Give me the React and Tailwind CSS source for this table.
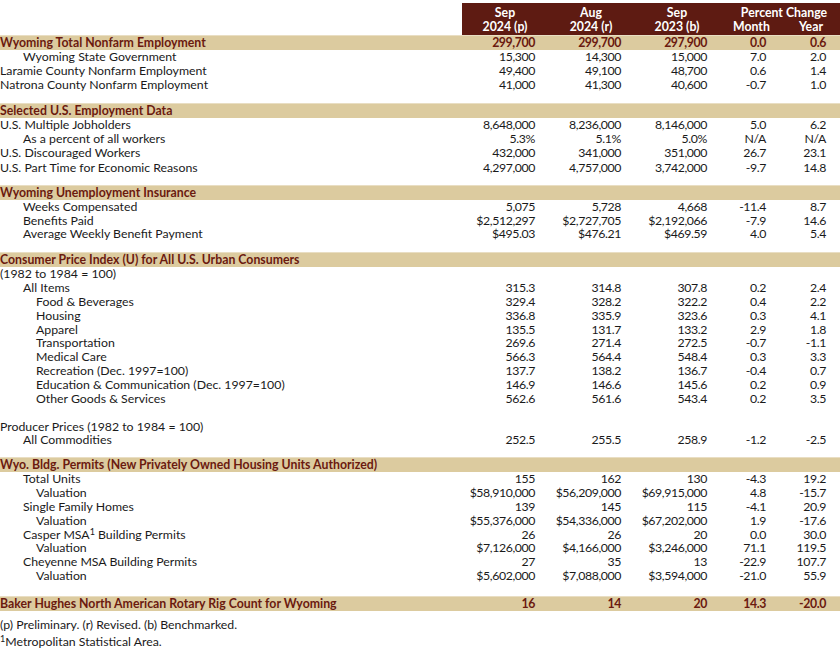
import React from 'react';

const COLS = 'grid grid-cols-[462px_86px_86px_86px_59px_61px]';

const sections = [
  {
    title: 'Wyoming Total Nonfarm Employment',
    values: ['299,700', '299,700', '297,900', '0.0', '0.6'],
    rowH: 'h-[13.85px]',
    gapAfter: 'h-[11px]',
    rows: [
      { label: 'Wyoming State Government', indent: 1, v: ['15,300', '14,300', '15,000', '7.0', '2.0'] },
      { label: 'Laramie County Nonfarm Employment', indent: 0, v: ['49,400', '49,100', '48,700', '0.6', '1.4'] },
      { label: 'Natrona County Nonfarm Employment', indent: 0, v: ['41,000', '41,300', '40,600', '-0.7', '1.0'] },
    ],
  },
  {
    title: 'Selected U.S. Employment Data',
    rowH: 'h-[14.3px]',
    gapAfter: 'h-[10px]',
    rows: [
      { label: 'U.S. Multiple Jobholders', indent: 0, v: ['8,648,000', '8,236,000', '8,146,000', '5.0', '6.2'] },
      { label: 'As a percent of all workers', indent: 1, v: ['5.3%', '5.1%', '5.0%', 'N/A', 'N/A'] },
      { label: 'U.S. Discouraged Workers', indent: 0, v: ['432,000', '341,000', '351,000', '26.7', '23.1'] },
      { label: 'U.S. Part Time for Economic Reasons', indent: 0, v: ['4,297,000', '4,757,000', '3,742,000', '-9.7', '14.8'] },
    ],
  },
  {
    title: 'Wyoming Unemployment Insurance',
    rowH: 'h-[13.85px]',
    gapAfter: 'h-[11px]',
    rows: [
      { label: 'Weeks Compensated', indent: 1, v: ['5,075', '5,728', '4,668', '-11.4', '8.7'] },
      { label: 'Benefits Paid', indent: 1, v: ['$2,512,297', '$2,727,705', '$2,192,066', '-7.9', '14.6'] },
      { label: 'Average Weekly Benefit Payment', indent: 1, v: ['$495.03', '$476.21', '$469.59', '4.0', '5.4'] },
    ],
  },
  {
    title: 'Consumer Price Index (U) for All U.S. Urban Consumers',
    rowH: 'h-[13.85px]',
    gapAfter: 'h-[10px]',
    rows: [
      { label: '(1982 to 1984 = 100)', indent: 0, v: ['', '', '', '', ''] },
      { label: 'All Items', indent: 1, v: ['315.3', '314.8', '307.8', '0.2', '2.4'] },
      { label: 'Food & Beverages', indent: 2, v: ['329.4', '328.2', '322.2', '0.4', '2.2'] },
      { label: 'Housing', indent: 2, v: ['336.8', '335.9', '323.6', '0.3', '4.1'] },
      { label: 'Apparel', indent: 2, v: ['135.5', '131.7', '133.2', '2.9', '1.8'] },
      { label: 'Transportation', indent: 2, v: ['269.6', '271.4', '272.5', '-0.7', '-1.1'] },
      { label: 'Medical Care', indent: 2, v: ['566.3', '564.4', '548.4', '0.3', '3.3'] },
      { label: 'Recreation (Dec. 1997=100)', indent: 2, v: ['137.7', '138.2', '136.7', '-0.4', '0.7'] },
      { label: 'Education & Communication (Dec. 1997=100)', indent: 2, v: ['146.9', '146.6', '145.6', '0.2', '0.9'] },
      { label: 'Other Goods & Services', indent: 2, v: ['562.6', '561.6', '543.4', '0.2', '3.5'] },
      { label: '', indent: 0, v: ['', '', '', '', ''] },
      { label: 'Producer Prices (1982 to 1984 = 100)', indent: 0, v: ['', '', '', '', ''] },
      { label: 'All Commodities', indent: 1, v: ['252.5', '255.5', '258.9', '-1.2', '-2.5'] },
    ],
  },
  {
    title: 'Wyo. Bldg. Permits (New Privately Owned Housing Units Authorized)',
    rowH: 'h-[13.85px]',
    gapAfter: 'h-[13px]',
    rows: [
      { label: 'Total Units', indent: 1, v: ['155', '162', '130', '-4.3', '19.2'] },
      { label: 'Valuation', indent: 2, v: ['$58,910,000', '$56,209,000', '$69,915,000', '4.8', '-15.7'] },
      { label: 'Single Family Homes', indent: 1, v: ['139', '145', '115', '-4.1', '20.9'] },
      { label: 'Valuation', indent: 2, v: ['$55,376,000', '$54,336,000', '$67,202,000', '1.9', '-17.6'] },
      { label: 'Casper MSA', sup: true, rest: ' Building Permits', indent: 1, v: ['26', '26', '20', '0.0', '30.0'] },
      { label: 'Valuation', indent: 2, v: ['$7,126,000', '$4,166,000', '$3,246,000', '71.1', '119.5'] },
      { label: 'Cheyenne MSA Building Permits', indent: 1, v: ['27', '35', '13', '-22.9', '107.7'] },
      { label: 'Valuation', indent: 2, v: ['$5,602,000', '$7,088,000', '$3,594,000', '-21.0', '55.9'] },
    ],
  },
  {
    title: 'Baker Hughes North American Rotary Rig Count for Wyoming',
    values: ['16', '14', '20', '14.3', '-20.0'],
    rowH: 'h-[13.85px]',
    gapAfter: 'h-[7.5px]',
    rows: [],
  },
];

const indents = ['pl-0', 'pl-[23px]', 'pl-[36px]'];
const pads = ['pr-[13px]', 'pr-[13px]', 'pr-[13px]', 'pr-[13px]', 'pr-[14px]'];

function TitleRow({ title, values }) {
  return (
    <div className={`${COLS} h-[15px] items-center bg-[#dccb9f] border-t border-[#e9dec3] font-bold text-[#6b1a0f]`}>
      <div className="whitespace-nowrap">{title}</div>
      {(values || ['', '', '', '', '']).map((v, i) => (
        <div key={i} className={`text-right tracking-[-0.4px] ${pads[i]}`}>{v}</div>
      ))}
    </div>
  );
}

function DataRow({ row, rowH }) {
  return (
    <div className={`${COLS} ${rowH} items-center`}>
      <div className={`whitespace-nowrap ${indents[row.indent]}`}>
        {row.label}
        {row.sup && <sup className="text-[9px] relative -top-[4px]">1</sup>}
        {row.rest}
      </div>
      {row.v.map((v, i) => (
        <div key={i} className={`text-right tracking-[-0.4px] ${pads[i]}`}>{v}</div>
      ))}
    </div>
  );
}

export default function App() {
  return (
    <div className="w-[840px] h-[661px] bg-white text-[#1a1a1a] text-[12.3px] leading-[14px] font-['Lato','Liberation_Sans',sans-serif] overflow-hidden">
      <div className="h-[3px]" />
      <div className={`${COLS} h-[32px]`}>
        <div />
        <div className="col-span-5 grid grid-cols-[86px_86px_86px_59px_61px] bg-[#5e1b12] text-white font-bold pt-[3px]">
          <div className="text-center">Sep<br />2024 (p)</div>
          <div className="text-center">Aug<br />2024 (r)</div>
          <div className="text-center">Sep<br />2023 (b)</div>
          <div className="col-span-2 flex flex-col">
            <div className="text-center pl-[8px] whitespace-nowrap">Percent Change</div>
            <div className="flex justify-between pl-[13px] pr-[17px]">
              <span>Month</span>
              <span>Year</span>
            </div>
          </div>
        </div>
      </div>
      {sections.map((s) => (
        <div key={s.title}>
          <TitleRow title={s.title} values={s.values} />
          {s.rows.map((r, i) => (
            <DataRow key={i} row={r} rowH={s.rowH} />
          ))}
          <div className={s.gapAfter} />
        </div>
      ))}
      <div className="h-[14px] whitespace-nowrap">(p) Preliminary. (r) Revised. (b) Benchmarked.</div>
      <div className="h-[3px]" />
      <div className="h-[14px] whitespace-nowrap">
        <sup className="text-[9px] relative -top-[4px]">1</sup>Metropolitan Statistical Area.
      </div>
    </div>
  );
}
